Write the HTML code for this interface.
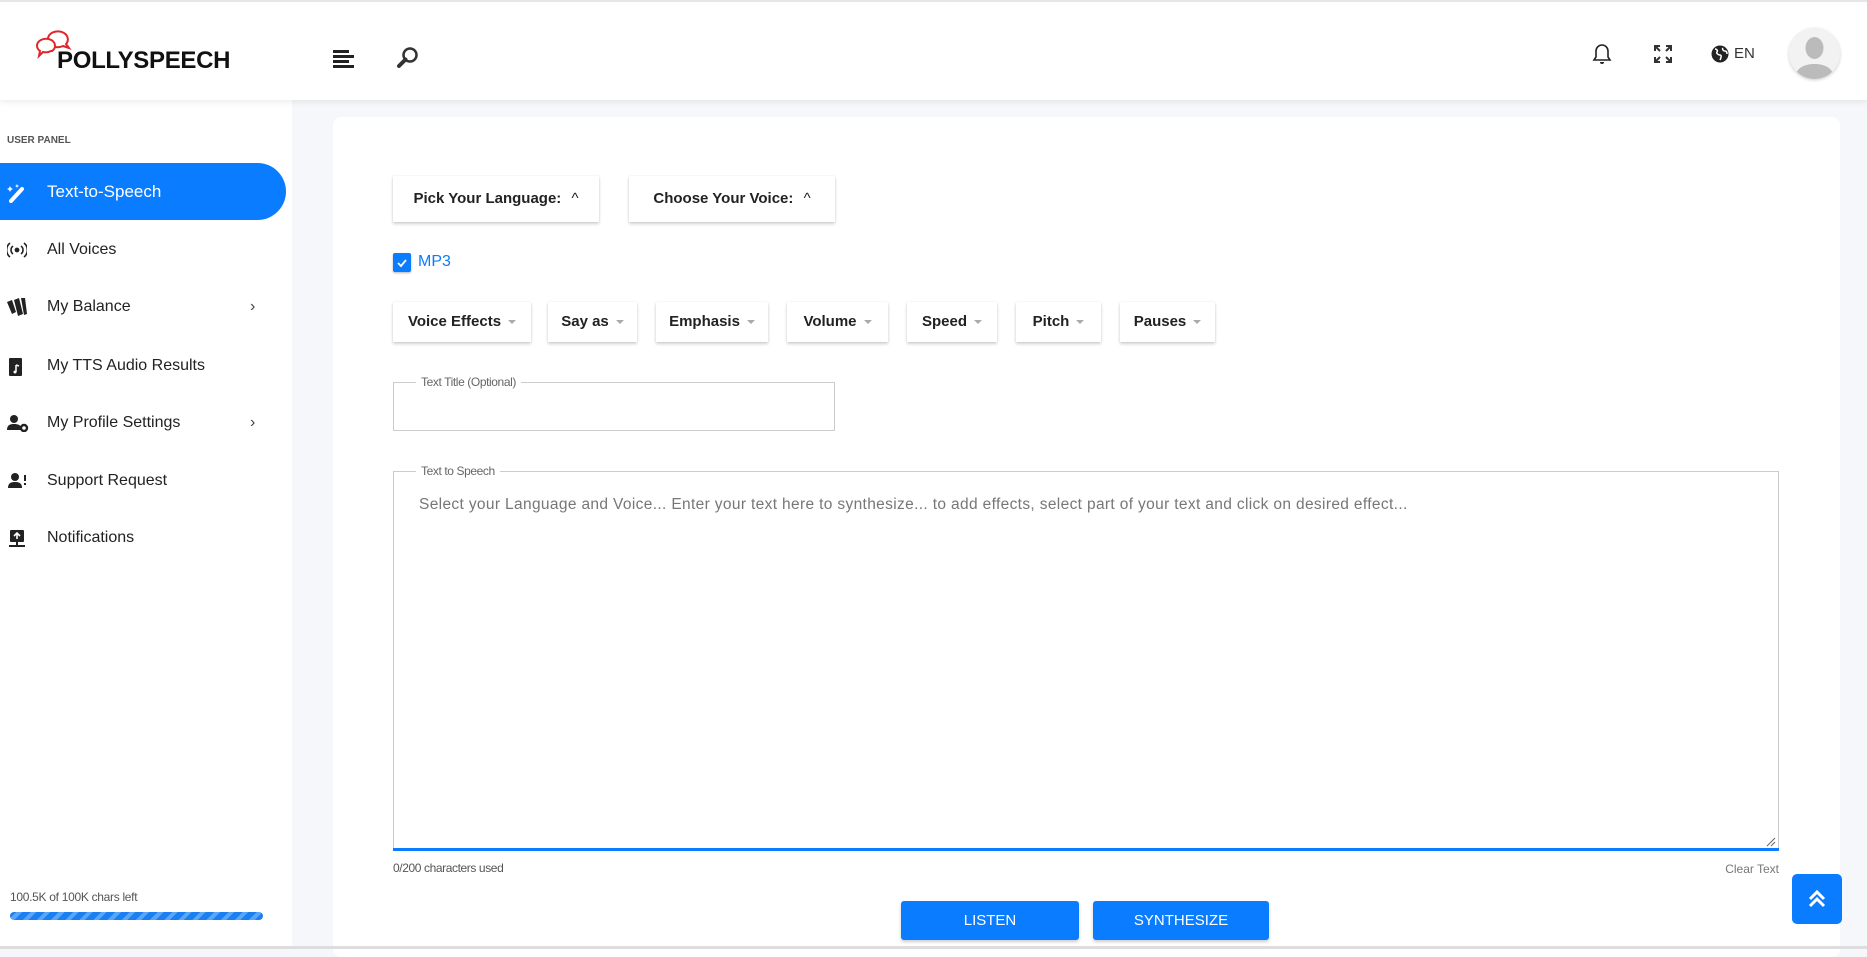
<!DOCTYPE html>
<html><head><meta charset="utf-8">
<style>
*{box-sizing:border-box;margin:0;padding:0}
body{width:1867px;height:949px;overflow:hidden;background:#f5f7fa;font-family:"Liberation Sans",sans-serif;position:relative;color:#222}
.abs{position:absolute}
#top{left:0;top:0;width:1867px;height:100px;background:#fff;border-top:2px solid #e4e6ea;box-shadow:0 2px 6px rgba(0,0,0,.08);z-index:2}
#side{left:0;top:100px;width:292px;height:849px;background:#fff}
.mi{position:absolute;left:0;width:286px;height:40px;font-size:16px;color:#222;line-height:40px}
.mi span{position:absolute;left:47px}
.mi svg{position:absolute;left:7px;top:11px}
.chev{position:absolute;left:250px;top:0;font-size:16px;color:#444}
#card{left:333px;top:117px;width:1507px;height:840px;background:#fff;border-radius:8px}
.btn{position:absolute;background:#fff;box-shadow:0 2px 3px rgba(0,0,0,.18),0 0 2px rgba(0,0,0,.08);font-size:15px;font-weight:bold;color:#222;text-align:center}
.dd::after{content:"";display:inline-block;margin-left:7px;border:4px solid transparent;border-top:4px solid #aaa;vertical-align:middle;margin-top:4px}
.fs{position:absolute;border:1px solid #ccc}
.lg{position:absolute;top:-8px;left:22px;background:#fff;padding:0 5px;font-size:12px;color:#666;letter-spacing:-.4px}
.bb{position:absolute;background:#0a7cff;color:#fff;font-size:15px;text-align:center;border-radius:3px;box-shadow:0 2px 3px rgba(0,0,0,.2)}
</style></head><body>
<div id="top" class="abs">
 <svg class="abs" style="left:34px;top:22px" width="42" height="36" viewBox="0 0 42 36"><path d="M14 14 a10 8 0 1 1 18 6 l3 4 -6 -2 a10 8 0 0 1 -15 -8z" fill="none" stroke="#e0262b" stroke-width="2"/><path d="M3 22 a9 7 0 1 1 15 5 l-1 0 a9 7 0 0 1 -8 1 l-4 4 1 -5 a9 7 0 0 1 -3 -5z" fill="#fff" stroke="#e0262b" stroke-width="2"/></svg>
 <div class="abs" style="left:57px;top:45px;font-size:24px;font-weight:bold;color:#111;letter-spacing:-.3px">POLLYSPEECH</div>
 <svg class="abs" style="left:333px;top:48px" width="21" height="18"><rect y="0" width="16" height="3" fill="#222"/><rect y="5" width="21" height="3" fill="#222"/><rect y="10" width="16" height="3" fill="#222"/><rect y="15" width="21" height="3" fill="#222"/></svg>
 <svg class="abs" style="left:396px;top:44px" width="24" height="24" viewBox="0 0 24 24"><circle cx="14" cy="9" r="6.5" fill="none" stroke="#333" stroke-width="2.5"/><path d="M9.5 13.5 L3 20" stroke="#333" stroke-width="4" stroke-linecap="round"/></svg>
 <svg class="abs" style="left:1592px;top:41px" width="20" height="22" viewBox="0 0 20 22"><path d="M10 2a6 6 0 0 0-6 6v6l-2 3h16l-2-3V8a6 6 0 0 0-6-6z" fill="none" stroke="#222" stroke-width="1.6"/><path d="M8 19a2 2 0 0 0 4 0" fill="#222"/></svg>
 <svg class="abs" style="left:1654px;top:43px" width="18" height="18" viewBox="0 0 18 18" fill="none" stroke="#333" stroke-width="2"><path d="M1 6V1h5M1 1l5 5M12 1h5v5M17 1l-5 5M1 12v5h5M1 17l5-5M17 12v5h-5M17 17l-5-5"/></svg>
 <svg class="abs" style="left:1711px;top:43px" width="18" height="18" viewBox="0 0 18 18"><circle cx="9" cy="9" r="8.5" fill="#222"/><path d="M4 4c2 0 3 2 2 3s1 3 3 3 1 3 0 5M12 3c-1 1 0 3 2 3s2 2 2 3" stroke="#fff" stroke-width="1.5" fill="none"/></svg>
 <div class="abs" style="left:1734px;top:43px;font-size:15px;color:#333">EN</div>
 <div class="abs" style="left:1789px;top:26px;width:51px;height:51px;border-radius:50%;background:#f2f2f2;box-shadow:0 1px 3px rgba(0,0,0,.2);overflow:hidden"><svg width="51" height="51" viewBox="0 0 51 51"><ellipse cx="25.5" cy="20" rx="9" ry="11" fill="#bbb"/><path d="M6 51c0-10 8-15 19.5-15S45 41 45 51z" fill="#bbb"/></svg></div>
</div>
<div id="side" class="abs">
 <div class="abs" style="left:7px;top:35px;font-size:10px;font-weight:bold;color:#555">USER PANEL</div>
 <div class="abs" style="left:0;top:63px;width:286px;height:57px;background:#0a7cff;border-radius:0 29px 29px 0"></div>
 <div class="mi" style="top:72px;color:#fff;font-size:17px"><svg width="20" height="20" viewBox="0 0 20 20"><path d="M4 18L15 6" stroke="#fff" stroke-width="4" stroke-linecap="round"/><path d="M3 3l1 2 2 1-2 1-1 2-1-2-2-1 2-1zM10 1l.6 1.4L12 3l-1.4.6L10 5l-.6-1.4L8 3l1.4-.6z" fill="#fff"/></svg><span>Text-to-Speech</span></div>
 <div class="mi" style="top:130px"><svg width="20" height="18" viewBox="0 0 20 18" fill="none" stroke="#222" stroke-width="1.6"><circle cx="10" cy="9" r="1.6" fill="#222"/><path d="M6 5a5 5 0 0 0 0 8M14 5a5 5 0 0 1 0 8M3 2a9 9 0 0 0 0 14M17 2a9 9 0 0 1 0 14"/></svg><span>All Voices</span></div>
 <div class="mi" style="top:187px"><svg width="22" height="18" viewBox="0 0 22 18"><path d="M0 4l5-2 4 12-4 2zM7 2l5-2 4 16-5 2zM14 0l4 0 2 16-3 1z" fill="#222"/></svg><span>My Balance</span><div class="chev">›</div></div>
 <div class="mi" style="top:246px"><svg width="18" height="20" viewBox="0 0 18 20"><rect x="2" y="1" width="13" height="18" rx="1" fill="#222"/><path d="M9 8v7M9 8l3 1" stroke="#fff" stroke-width="1.5"/><circle cx="8" cy="15" r="1.5" fill="#fff"/></svg><span>My TTS Audio Results</span></div>
 <div class="mi" style="top:303px"><svg width="22" height="18" viewBox="0 0 22 18"><circle cx="7" cy="5" r="4" fill="#222"/><path d="M0 16c0-5 3-6 7-6s6 1 7 3v3z" fill="#222"/><circle cx="17" cy="14" r="3" fill="none" stroke="#222" stroke-width="2.4"/></svg><span>My Profile Settings</span><div class="chev">›</div></div>
 <div class="mi" style="top:361px"><svg width="22" height="18" viewBox="0 0 22 18"><circle cx="8" cy="5" r="4" fill="#222"/><path d="M1 16c0-5 3-6 7-6s7 1 7 6z" fill="#222"/><rect x="17" y="3" width="2" height="6" fill="#222"/><rect x="17" y="11" width="2" height="2" fill="#222"/></svg><span>Support Request</span></div>
 <div class="mi" style="top:418px"><svg width="20" height="20" viewBox="0 0 20 20"><rect x="3" y="1" width="14" height="12" rx="1" fill="#222"/><path d="M10 4v6M7 7l3-3 3 3" stroke="#fff" stroke-width="1.6" fill="none"/><path d="M10 13v4M2 17h16" stroke="#222" stroke-width="2"/></svg><span>Notifications</span></div>
 <div class="abs" style="left:10px;top:790px;font-size:12px;color:#555;letter-spacing:-.3px">100.5K of 100K chars left</div>
 <div class="abs" style="left:10px;top:812px;width:253px;height:8px;border-radius:4px;background:repeating-linear-gradient(-45deg,#1a7ff0 0 6px,#5aa5f8 6px 10px)"></div>
</div>
<div id="card" class="abs"></div>
<div class="btn" style="left:393px;top:176px;width:206px;height:46px;line-height:46px">Pick Your Language: <span style="font-weight:normal;margin-left:6px">^</span></div>
<div class="btn" style="left:629px;top:176px;width:206px;height:46px;line-height:46px">Choose Your Voice: <span style="font-weight:normal;margin-left:6px">^</span></div>
<div class="abs" style="left:393px;top:253px;width:18px;height:19px;background:#0a7cff;border-radius:2px;box-shadow:0 1px 2px rgba(0,0,0,.3)"><svg width="18" height="19"><path d="M5 10l3 3 5-6" stroke="#fff" stroke-width="1.8" fill="none"/></svg></div>
<div class="abs" style="left:418px;top:253px;font-size:16px;color:#0a7cff">MP3</div>
<div class="btn dd" style="left:393px;top:302px;width:138px;height:40px;line-height:40px">Voice Effects</div>
<div class="btn dd" style="left:548px;top:302px;width:89px;height:40px;line-height:40px">Say as</div>
<div class="btn dd" style="left:656px;top:302px;width:112px;height:40px;line-height:40px">Emphasis</div>
<div class="btn dd" style="left:787px;top:302px;width:101px;height:40px;line-height:40px">Volume</div>
<div class="btn dd" style="left:907px;top:302px;width:90px;height:40px;line-height:40px">Speed</div>
<div class="btn dd" style="left:1016px;top:302px;width:85px;height:40px;line-height:40px">Pitch</div>
<div class="btn dd" style="left:1120px;top:302px;width:95px;height:40px;line-height:40px">Pauses</div>
<div class="fs" style="left:393px;top:382px;width:442px;height:49px"><div class="lg">Text Title (Optional)</div></div>
<div class="fs" style="left:393px;top:471px;width:1386px;height:378px;border-bottom:none"><div class="lg">Text to Speech</div>
 <div class="abs" style="left:25px;top:24px;font-size:15.5px;color:#777;letter-spacing:.35px;white-space:nowrap">Select your Language and Voice... Enter your text here to synthesize... to add effects, select part of your text and click on desired effect...</div>
 <svg class="abs" style="right:2px;bottom:2px" width="10" height="10"><path d="M1 9L9 1M5 9L9 5" stroke="#666"/></svg>
</div>
<div class="abs" style="left:393px;top:848px;width:1386px;height:3px;background:#0a7cff"></div>
<div class="abs" style="left:393px;top:861px;font-size:12px;color:#555;letter-spacing:-.4px">0/200 characters used</div>
<div class="abs" style="left:1700px;top:862px;width:79px;text-align:right;font-size:12px;color:#777">Clear Text</div>
<div class="bb" style="left:901px;top:901px;width:178px;height:39px;line-height:39px">LISTEN</div>
<div class="bb" style="left:1093px;top:901px;width:176px;height:39px;line-height:39px">SYNTHESIZE</div>
<div class="abs" style="left:1792px;top:874px;width:50px;height:50px;background:#0a7cff;border-radius:5px"><svg width="50" height="50"><path d="M18 25l7-7 7 7M18 32l7-7 7 7" stroke="#fff" stroke-width="3" fill="none"/></svg></div>
<div class="abs" style="left:0;top:946px;width:1867px;height:3px;background:#ddd"></div>
</body></html>
